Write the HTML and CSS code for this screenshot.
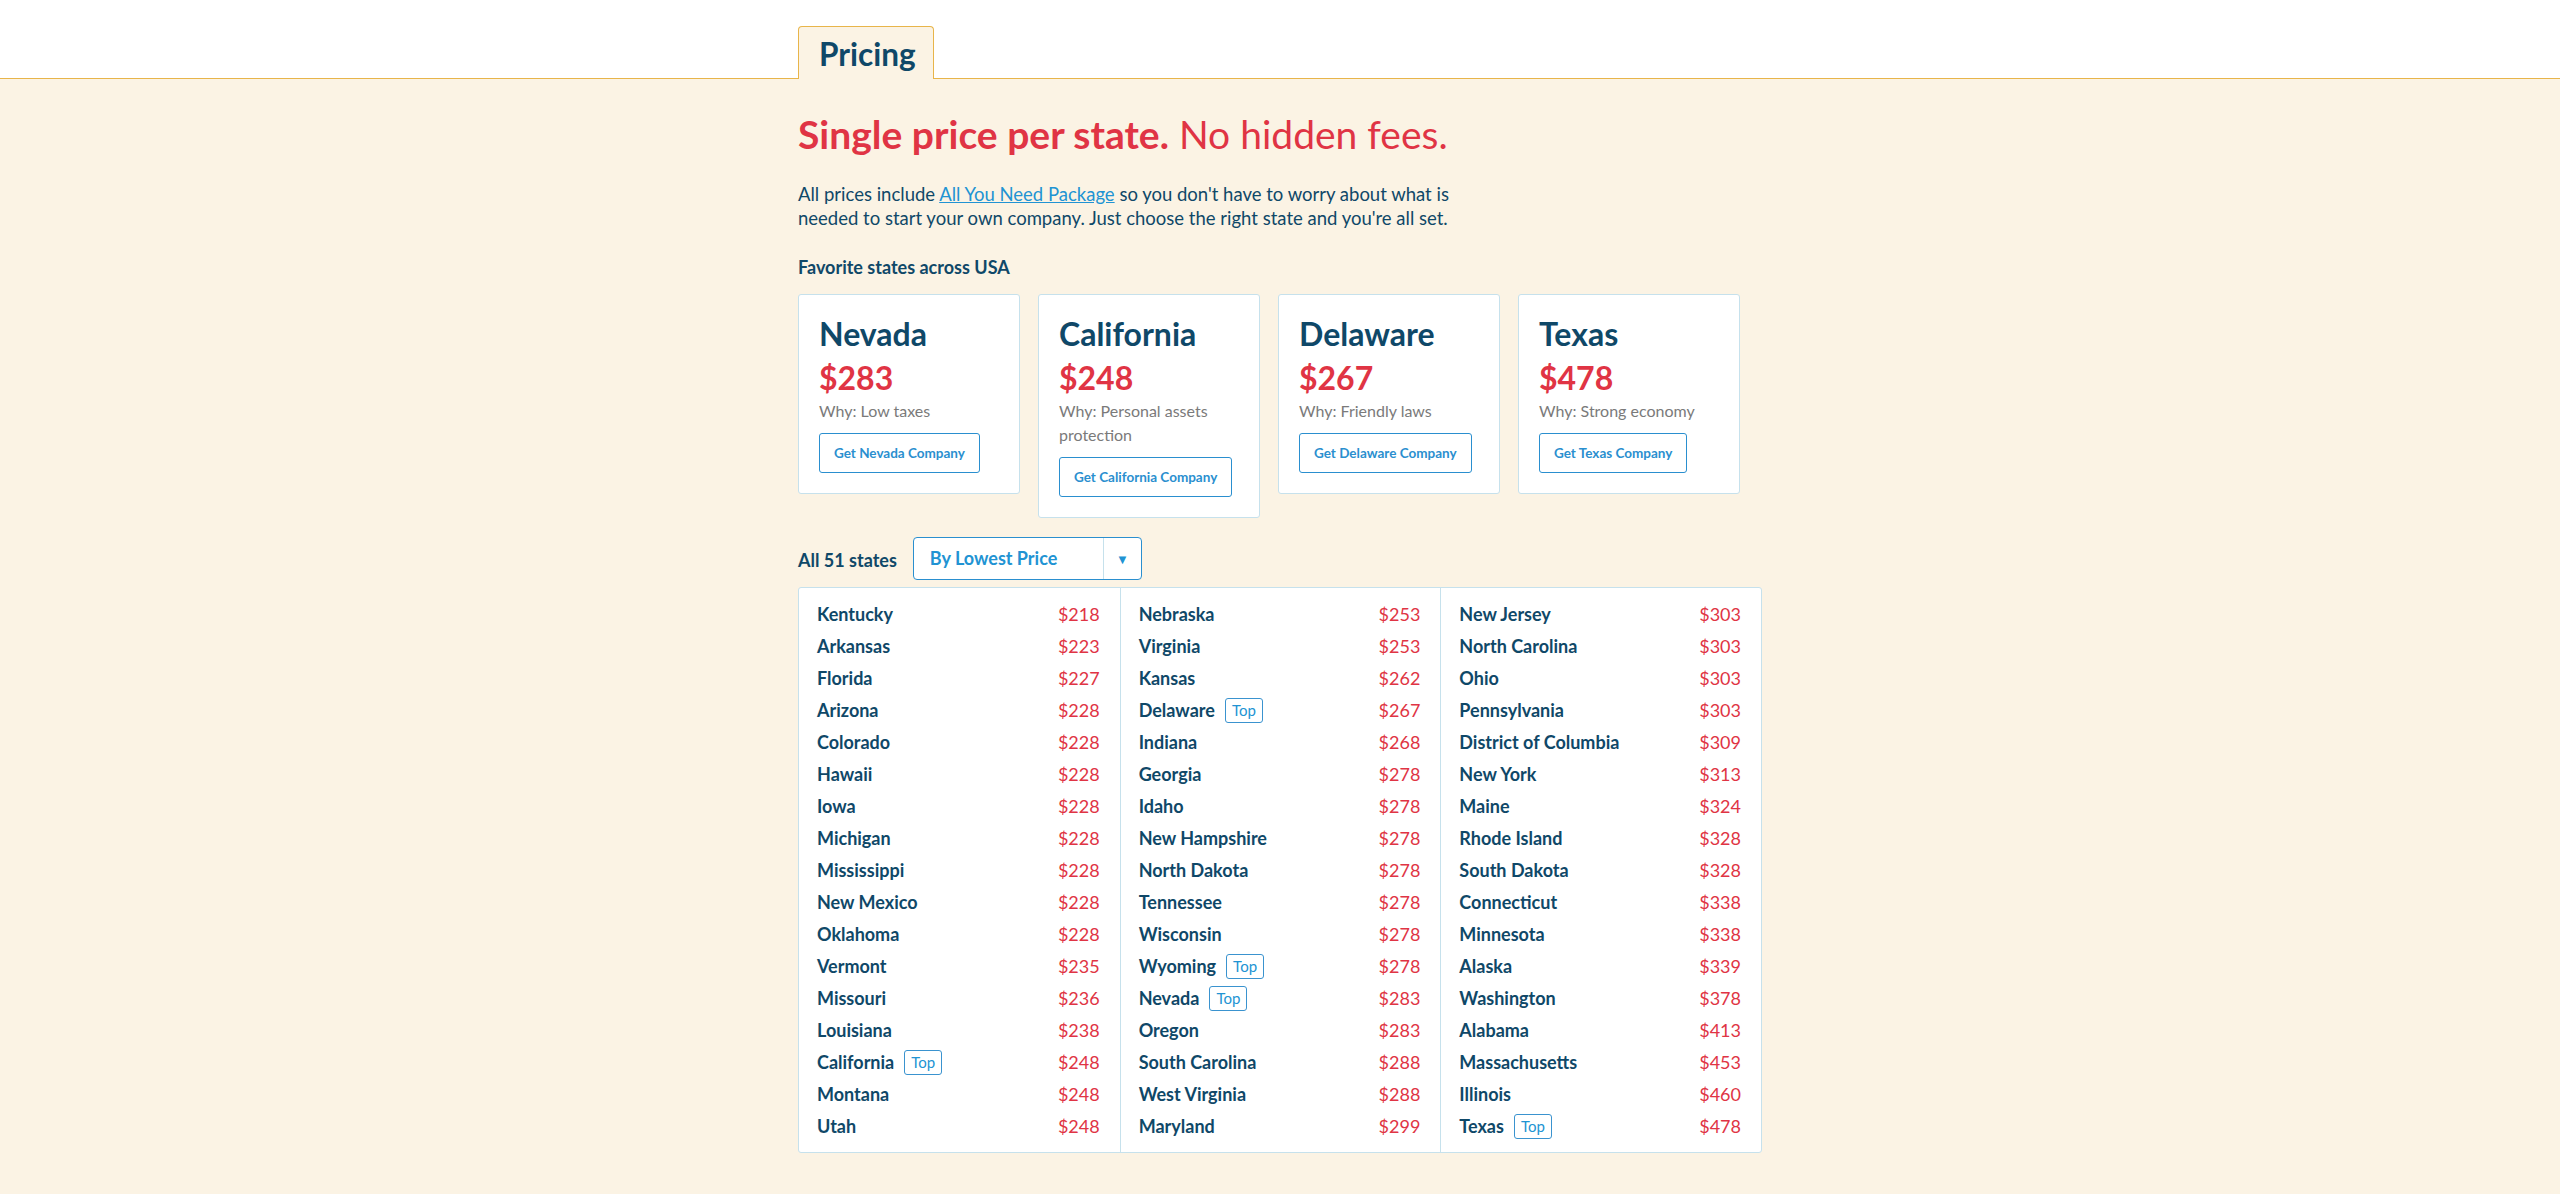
FILE: index.html
```html
<!DOCTYPE html>
<html lang="en">
<head>
<meta charset="utf-8">
<title>Pricing</title>
<link rel="stylesheet" href="styles.css">
</head>
<body>
<header class="topbar">
  <div class="wrap">
    <div class="tab">Pricing</div>
  </div>
</header>
<main class="wrap main">
  <h1 class="headline"><strong>Single price per state.</strong> No hidden fees.</h1>
  <p class="intro">All prices include <a href="#">All You Need Package</a> so you don't have to worry about what is needed to start your own company. Just choose the right state and you're all set.</p>
  <h2 class="subhead">Favorite states across USA</h2>
  <div class="cards">
    <div class="card">
      <div class="card-title">Nevada</div>
      <div class="card-price">$283</div>
      <div class="card-why">Why: Low taxes</div>
      <a class="btn" href="#">Get Nevada Company</a>
    </div>
    <div class="card">
      <div class="card-title">California</div>
      <div class="card-price">$248</div>
      <div class="card-why">Why: Personal assets protection</div>
      <a class="btn" href="#">Get California Company</a>
    </div>
    <div class="card">
      <div class="card-title">Delaware</div>
      <div class="card-price">$267</div>
      <div class="card-why">Why: Friendly laws</div>
      <a class="btn" href="#">Get Delaware Company</a>
    </div>
    <div class="card">
      <div class="card-title">Texas</div>
      <div class="card-price">$478</div>
      <div class="card-why">Why: Strong economy</div>
      <a class="btn" href="#">Get Texas Company</a>
    </div>
  </div>
  <div class="filter">
    <span class="filter-label">All 51 states</span>
    <div class="select">
      <span class="select-text">By Lowest Price</span>
      <span class="select-arrow">▼</span>
    </div>
  </div>
  <div class="list">
    <div class="col">
      <div class="row"><span class="name">Kentucky</span><span class="price">$218</span></div>
      <div class="row"><span class="name">Arkansas</span><span class="price">$223</span></div>
      <div class="row"><span class="name">Florida</span><span class="price">$227</span></div>
      <div class="row"><span class="name">Arizona</span><span class="price">$228</span></div>
      <div class="row"><span class="name">Colorado</span><span class="price">$228</span></div>
      <div class="row"><span class="name">Hawaii</span><span class="price">$228</span></div>
      <div class="row"><span class="name">Iowa</span><span class="price">$228</span></div>
      <div class="row"><span class="name">Michigan</span><span class="price">$228</span></div>
      <div class="row"><span class="name">Mississippi</span><span class="price">$228</span></div>
      <div class="row"><span class="name">New Mexico</span><span class="price">$228</span></div>
      <div class="row"><span class="name">Oklahoma</span><span class="price">$228</span></div>
      <div class="row"><span class="name">Vermont</span><span class="price">$235</span></div>
      <div class="row"><span class="name">Missouri</span><span class="price">$236</span></div>
      <div class="row"><span class="name">Louisiana</span><span class="price">$238</span></div>
      <div class="row"><span class="name">California<span class="top">Top</span></span><span class="price">$248</span></div>
      <div class="row"><span class="name">Montana</span><span class="price">$248</span></div>
      <div class="row"><span class="name">Utah</span><span class="price">$248</span></div>
    </div>
    <div class="col">
      <div class="row"><span class="name">Nebraska</span><span class="price">$253</span></div>
      <div class="row"><span class="name">Virginia</span><span class="price">$253</span></div>
      <div class="row"><span class="name">Kansas</span><span class="price">$262</span></div>
      <div class="row"><span class="name">Delaware<span class="top">Top</span></span><span class="price">$267</span></div>
      <div class="row"><span class="name">Indiana</span><span class="price">$268</span></div>
      <div class="row"><span class="name">Georgia</span><span class="price">$278</span></div>
      <div class="row"><span class="name">Idaho</span><span class="price">$278</span></div>
      <div class="row"><span class="name">New Hampshire</span><span class="price">$278</span></div>
      <div class="row"><span class="name">North Dakota</span><span class="price">$278</span></div>
      <div class="row"><span class="name">Tennessee</span><span class="price">$278</span></div>
      <div class="row"><span class="name">Wisconsin</span><span class="price">$278</span></div>
      <div class="row"><span class="name">Wyoming<span class="top">Top</span></span><span class="price">$278</span></div>
      <div class="row"><span class="name">Nevada<span class="top">Top</span></span><span class="price">$283</span></div>
      <div class="row"><span class="name">Oregon</span><span class="price">$283</span></div>
      <div class="row"><span class="name">South Carolina</span><span class="price">$288</span></div>
      <div class="row"><span class="name">West Virginia</span><span class="price">$288</span></div>
      <div class="row"><span class="name">Maryland</span><span class="price">$299</span></div>
    </div>
    <div class="col">
      <div class="row"><span class="name">New Jersey</span><span class="price">$303</span></div>
      <div class="row"><span class="name">North Carolina</span><span class="price">$303</span></div>
      <div class="row"><span class="name">Ohio</span><span class="price">$303</span></div>
      <div class="row"><span class="name">Pennsylvania</span><span class="price">$303</span></div>
      <div class="row"><span class="name">District of Columbia</span><span class="price">$309</span></div>
      <div class="row"><span class="name">New York</span><span class="price">$313</span></div>
      <div class="row"><span class="name">Maine</span><span class="price">$324</span></div>
      <div class="row"><span class="name">Rhode Island</span><span class="price">$328</span></div>
      <div class="row"><span class="name">South Dakota</span><span class="price">$328</span></div>
      <div class="row"><span class="name">Connecticut</span><span class="price">$338</span></div>
      <div class="row"><span class="name">Minnesota</span><span class="price">$338</span></div>
      <div class="row"><span class="name">Alaska</span><span class="price">$339</span></div>
      <div class="row"><span class="name">Washington</span><span class="price">$378</span></div>
      <div class="row"><span class="name">Alabama</span><span class="price">$413</span></div>
      <div class="row"><span class="name">Massachusetts</span><span class="price">$453</span></div>
      <div class="row"><span class="name">Illinois</span><span class="price">$460</span></div>
      <div class="row"><span class="name">Texas<span class="top">Top</span></span><span class="price">$478</span></div>
    </div>
  </div>
</main>
</body>
</html>
```
FILE: styles.css
```css
* { box-sizing: border-box; }
html, body {
  margin: 0;
  padding: 0;
}
body {
  background: #fbf3e4;
  font-family: Lato, "Open Sans", sans-serif;
  color: #0f4868;
  min-height: 1194px;
}
.wrap {
  width: 964px;
  margin: 0 auto;
}
.topbar {
  background: #ffffff;
  height: 79px;
  border-bottom: 1px solid #e8b54a;
  display: flex;
  align-items: flex-end;
}
.topbar .wrap {
  display: flex;
}
.tab {
  width: 136px;
  height: 53px;
  margin-bottom: -1px;
  background: #fbf3e4;
  border: 1px solid #e8b54a;
  border-bottom: none;
  border-radius: 4px 4px 0 0;
  padding-left: 20px;
  font-size: 31.5px;
  font-weight: 700;
  line-height: 54px;
  color: #0f4868;
}
.main {
  padding-top: 32px;
  padding-bottom: 40px;
}
.headline {
  margin: 0;
  font-size: 39px;
  line-height: 46px;
  font-weight: 400;
  color: #e03444;
}
.headline strong { font-weight: 700; }
.intro {
  margin: 25px 0 0;
  width: 670px;
  font-size: 18.5px;
  line-height: 24px;
  color: #0f4868;
}
.intro a {
  color: #2193d3;
  text-decoration: underline;
}
.subhead {
  margin: 25px 0 0;
  font-size: 18px;
  line-height: 24px;
  font-weight: 700;
}
.cards {
  margin-top: 15px;
  display: flex;
  gap: 18px;
  align-items: flex-start;
}
.card {
  width: 222px;
  background: #ffffff;
  border: 1px solid #c6e1ec;
  border-radius: 3px;
  padding: 19px 20px 20px;
}
.card-title {
  font-size: 32px;
  line-height: 40px;
  font-weight: 700;
  color: #0f4868;
}
.card-price {
  margin-top: 4px;
  font-size: 32px;
  line-height: 40px;
  font-weight: 700;
  color: #e03444;
}
.card-why {
  margin-top: 1px;
  font-size: 16px;
  line-height: 24px;
  color: #7a7a7a;
}
.btn {
  display: inline-block;
  margin-top: 10px;
  height: 40px;
  line-height: 38px;
  padding: 0 14px;
  border: 1px solid #2a8fcf;
  border-radius: 3px;
  font-size: 13.5px;
  font-weight: 700;
  color: #2a8fcf;
  text-decoration: none;
  white-space: nowrap;
}
.filter {
  margin-top: 19px;
  display: flex;
  align-items: center;
  gap: 16px;
}
.filter-label {
  font-size: 18px;
  font-weight: 700;
  line-height: 24px;
  padding-top: 3px;
}
.select {
  width: 229px;
  height: 43px;
  display: flex;
  background: #ffffff;
  border: 1px solid #2a8fcf;
  border-radius: 4px;
}
.select-text {
  flex: 1;
  padding-left: 16px;
  font-size: 18px;
  font-weight: 700;
  line-height: 40px;
  color: #2193d3;
}
.select-arrow {
  width: 38px;
  border-left: 1px solid #c6e1ec;
  display: flex;
  align-items: center;
  justify-content: center;
  font-size: 13px;
  color: #2193d3;
}
.list {
  margin-top: 7px;
  display: grid;
  grid-template-columns: repeat(3, 1fr);
  background: #ffffff;
  border: 1px solid #c6e1ec;
  border-radius: 3px;
}
.col {
  padding: 10px 20px 10px 18px;
}
.col + .col {
  border-left: 1px solid #c6e1ec;
}
.row {
  display: flex;
  justify-content: space-between;
  align-items: center;
  height: 32px;
}
.name {
  display: flex;
  align-items: center;
  font-size: 18px;
  font-weight: 700;
  color: #0f4868;
}
.price {
  font-size: 18px;
  color: #e03444;
}
.top {
  display: inline-block;
  margin-left: 10px;
  height: 25px;
  line-height: 23px;
  padding: 0 6px;
  border: 1px solid #3a93cf;
  border-radius: 3px;
  font-size: 15px;
  font-weight: 400;
  color: #2193d3;
}
```
